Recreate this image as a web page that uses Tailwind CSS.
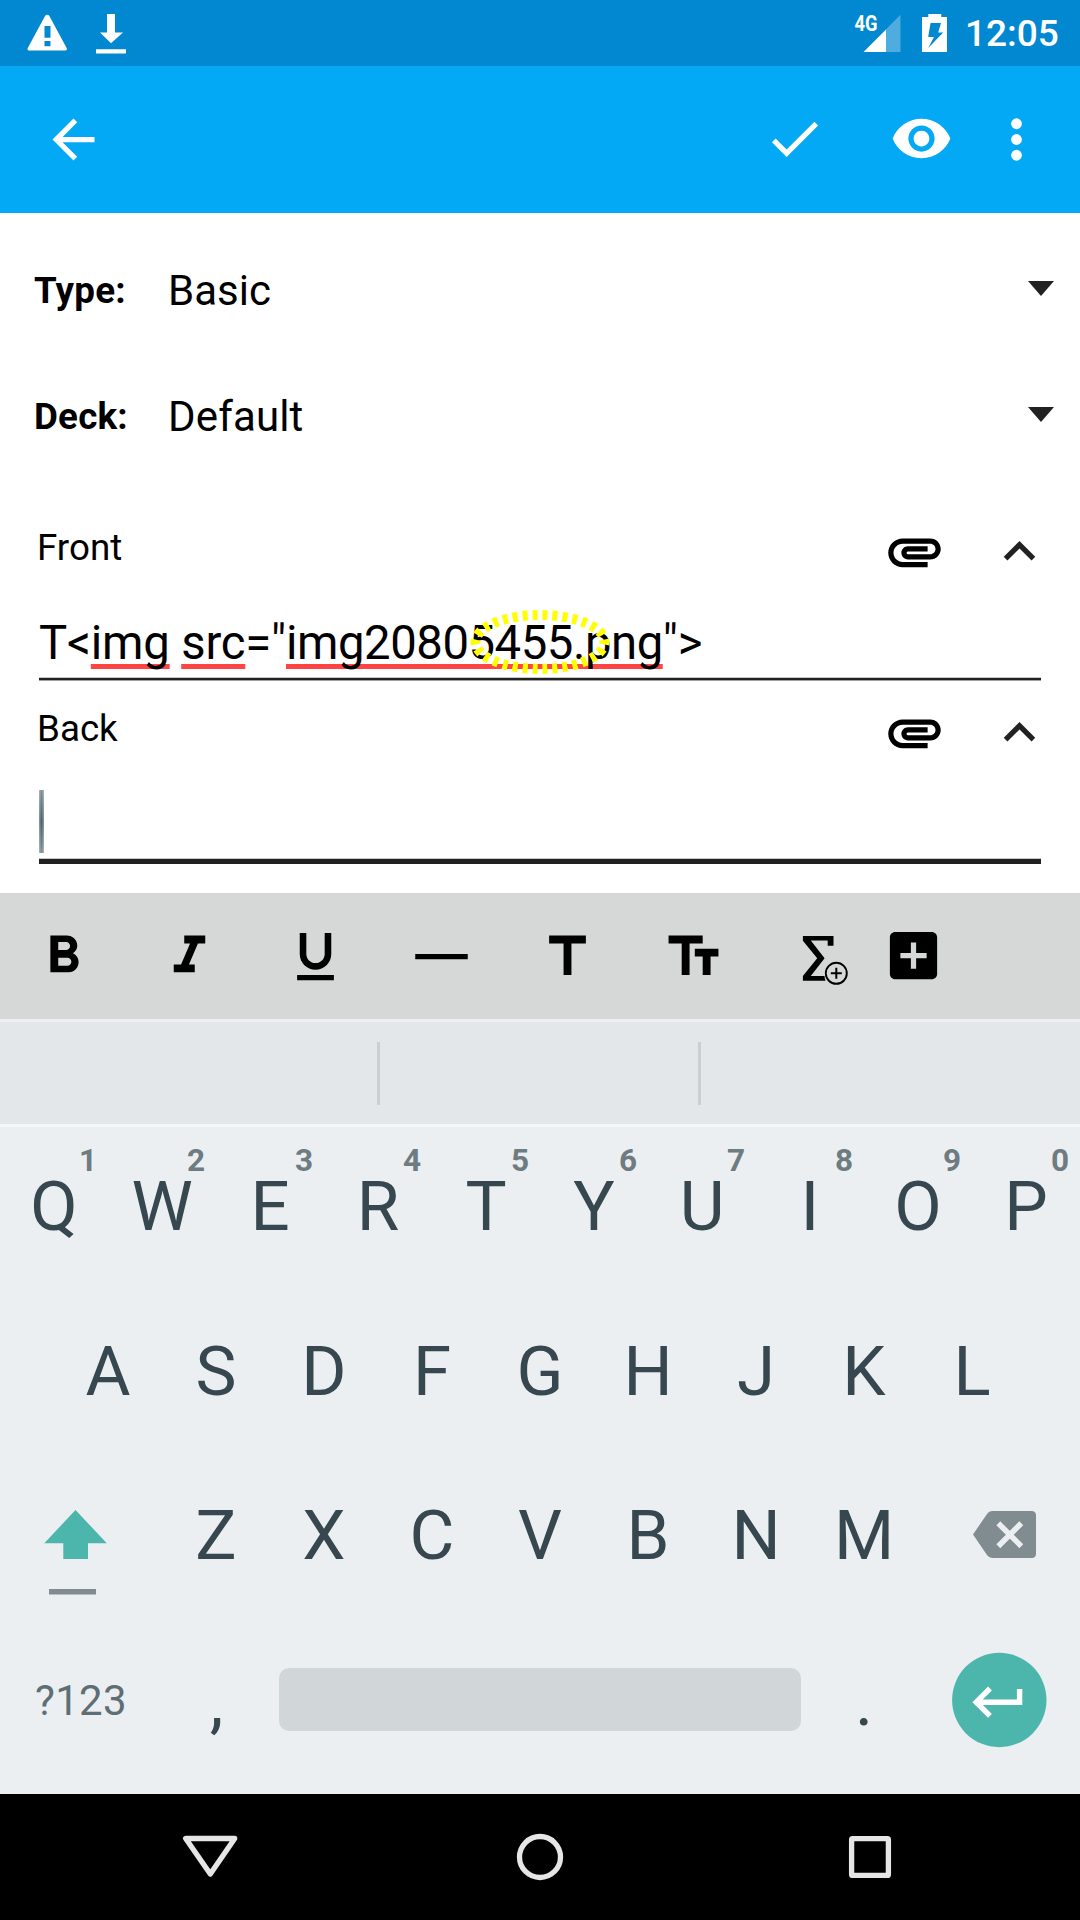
<!DOCTYPE html>
<html lang="en">
<head>
<meta charset="utf-8">
<title>Note editor</title>
<script src="https://cdn.jsdelivr.net/npm/@tailwindcss/browser@4"></script>
</head>
<body class="w-[1080px] h-[1920px] overflow-hidden bg-white text-black font-['Roboto',sans-serif] flex flex-col">

<!-- Status bar -->
<header class="h-[66px] shrink-0 bg-[#0288d1] flex items-center text-white">
  <svg class="ml-[21px] w-[52px] h-[66px]" viewBox="21 0 52 66" fill="currentColor"><path fill-rule="evenodd" d="M45.3 15.4q1.9-1.4 3.800 0L66.900 48.500q.3 1.800-1.200 1.900H28.700q-1.500-.1-1.200-1.900zM44.500 26v11.700h6V26zM44.500 41v5.200h6V41z"/></svg>
  <svg class="ml-[19px] w-[38px] h-[66px]" viewBox="92 0 38 66" fill="currentColor"><path d="M107 14h8v18.500h8L111 43.300 100 32.500h7zM96 49.300h30v4.200H96z"/></svg>
  <svg class="ml-[720px] w-[55px] h-[66px]" viewBox="850 0 55 66" fill="currentColor"><path d="M886 29.300L900.500 14.700V52H886z" fill-opacity=".3"/><path d="M863.500 52L886 29.500V52z"/><text x="854.500" y="31.300" font-size="22.500" font-weight="700" textLength="23" lengthAdjust="spacingAndGlyphs">4G</text></svg>
  <svg class="ml-[11px] w-[36px] h-[66px]" viewBox="916 0 36 66" fill="currentColor"><path fill-rule="evenodd" d="M928.300 14h13v3H947v35h-25V17h6.300zM930.500 23l-2.300 14h5.800l-5.800 11 15-15.600h-5l2.800-9.400z"/></svg>
  <span class="ml-[13px] text-[37px] font-medium leading-[66px] pt-[2px]">12:05</span>
</header>

<!-- App bar -->
<nav class="h-[147px] shrink-0 bg-[#03a9f4] text-white flex items-center">
  <svg class="ml-[42px] w-[63px] h-[63px]" viewBox="0 0 24 24" fill="currentColor"><path d="M20 11H7.830l5.590-5.590L12 4l-8 8 8 8 1.410-1.410L7.830 13H20v-2z"/></svg>
  <svg class="ml-[658px] -mt-[2px] w-[63px] h-[63px]" viewBox="0 0 24 24" fill="currentColor"><path d="M9 16.170L4.830 12l-1.420 1.410L9 19 21 7l-1.410-1.410z"/></svg>
  <svg class="ml-[64px] -mt-[2px] w-[63px] h-[63px]" viewBox="0 0 24 24" fill="currentColor"><path d="M12 4.500C7 4.500 2.730 7.610 1 12c1.730 4.390 6 7.500 11 7.500s9.270-3.110 11-7.500c-1.730-4.390-6-7.500-11-7.500zM12 17c-2.760 0-5-2.240-5-5s2.240-5 5-5 5 2.240 5 5-2.240 5-5 5zm0-8c-1.660 0-3 1.340-3 3s1.340 3 3 3 3-1.340 3-3-1.340-3-3-3z"/></svg>
  <svg class="ml-[32px] w-[63px] h-[63px]" viewBox="0 0 24 24" fill="currentColor"><circle cx="12" cy="6" r="2.050"/><circle cx="12" cy="12" r="2.050"/><circle cx="12" cy="18" r="2.050"/></svg>
</nav>

<!-- Note form -->
<main class="h-[680px] shrink-0 pt-[14px]">
  <div class="h-[126px] flex items-center pl-[34px]">
    <b class="w-[134px] text-[36.750px] tracking-[0.200px] font-bold leading-[126px] pt-[2px]">Type:</b>
    <span class="flex-1 text-[42px] leading-[126px] pt-[2px]">Basic</span>
    <svg class="mr-[26px] -mt-[3px] w-[26px] h-[15px]" viewBox="0 0 26 15"><path d="M0 0h26L13 15z" fill="#212121"/></svg>
  </div>
  <div class="h-[126px] flex items-center pl-[34px]">
    <b class="w-[134px] text-[36.750px] tracking-[0.200px] font-bold leading-[126px] pt-[2px]">Deck:</b>
    <span class="flex-1 text-[42px] tracking-[0.150px] leading-[126px] pt-[2px]">Default</span>
    <svg class="mr-[26px] -mt-[3px] w-[26px] h-[15px]" viewBox="0 0 26 15"><path d="M0 0h26L13 15z" fill="#212121"/></svg>
  </div>

  <section class="mt-[41px] h-[161px]">
    <div class="h-[63px] flex pl-[37px]">
      <span class="flex-1 text-[36.750px] leading-[55px]">Front</span>
      <svg class="w-[63px] h-[63px] mr-[42px]" viewBox="0 0 24 24"><path d="M2 12.500C2 9.460 4.460 7 7.500 7H18c2.210 0 4 1.790 4 4s-1.790 4-4 4H9.500C8.120 15 7 13.880 7 12.500S8.120 10 9.500 10H17v2H9.410c-.55 0-.55 1 0 1H18c1.100 0 2-.9 2-2s-.9-2-2-2H7.500C5.570 9 4 10.570 4 12.500S5.570 16 7.500 16H17v2H7.500C4.460 18 2 15.540 2 12.500z"/></svg>
      <svg class="w-[63px] h-[63px] mr-[29px]" viewBox="0 0 24 24" fill="#212121"><path d="M12 8l-6 6 1.410 1.410L12 10.830l4.590 4.580L18 14z"/></svg>
    </div>
    <div class="relative ml-[39px] w-[1002px] h-[98px] pt-[26px]">
      <div class="text-[47.250px] leading-[68px] whitespace-pre tracking-[-0.200px]">T&lt;<span class="underline decoration-[#ff4444] decoration-[5px] underline-offset-[5px] [text-decoration-skip-ink:none]">img</span> <span class="underline decoration-[#ff4444] decoration-[5px] underline-offset-[5px] [text-decoration-skip-ink:none]">src</span>="<span class="tracking-[-0.450px] underline decoration-[#ff4444] decoration-[5px] underline-offset-[5px] [text-decoration-skip-ink:none]">img20805455.png</span>"&gt;</div>
      <div class="h-[4px] bg-[#212121] border-t border-b border-t-[#c8c8c8] border-b-[#a0a0a0]"></div>
      <!-- dashed highlight over the file name -->
      <svg class="absolute left-[426px] top-[22px] w-[150px] h-[74px]" viewBox="0 0 150 74"><ellipse cx="75" cy="37" rx="64.500" ry="27" fill="none" stroke="#ffff00" stroke-width="10" pathLength="300" stroke-dasharray="5 5" stroke-dashoffset="2.500"/></svg>
    </div>
  </section>

  <section class="mt-[20px] h-[163px]">
    <div class="h-[63px] flex pl-[37px]">
      <span class="flex-1 text-[36.750px] leading-[55px]">Back</span>
      <svg class="w-[63px] h-[63px] mr-[42px]" viewBox="0 0 24 24"><path d="M2 12.500C2 9.460 4.460 7 7.500 7H18c2.210 0 4 1.790 4 4s-1.790 4-4 4H9.500C8.120 15 7 13.880 7 12.500S8.120 10 9.500 10H17v2H9.410c-.55 0-.55 1 0 1H18c1.100 0 2-.9 2-2s-.9-2-2-2H7.500C5.570 9 4 10.570 4 12.500S5.570 16 7.500 16H17v2H7.500C4.460 18 2 15.540 2 12.500z"/></svg>
      <svg class="w-[63px] h-[63px] mr-[29px]" viewBox="0 0 24 24" fill="#212121"><path d="M12 8l-6 6 1.410 1.410L12 10.830l4.590 4.580L18 14z"/></svg>
    </div>
    <div class="ml-[39px] w-[1002px] h-[100px] pt-[26px]">
      <div class="w-[5px] h-[63px] mb-[5px] bg-linear-to-r from-[#8a9aa2] via-[#4a606a] to-[#8a9aa2]"><div class="h-full bg-linear-to-b from-white/30 via-white/0 to-white/30"></div></div>
      <div class="h-[6px] bg-[#212121] border-t border-t-[#c8c8c8]"></div>
    </div>
  </section>
</main>

<!-- Formatting toolbar -->
<div class="h-[126px] shrink-0 bg-[#d6d8d7] flex items-center">
  <div class="w-[126px] flex justify-center"><svg class="w-[63px] h-[63px]" viewBox="0 0 24 24"><path d="M15.600 10.790c.97-.67 1.650-1.770 1.650-2.790 0-2.260-1.750-4-4-4H7v14h7.040c2.090 0 3.710-1.700 3.710-3.790 0-1.520-.86-2.820-2.150-3.420zM10 6.500h3c.83 0 1.500.67 1.500 1.500s-.67 1.500-1.500 1.500h-3v-3zm3.500 9H10v-3h3.500c.83 0 1.500.67 1.500 1.500s-.67 1.500-1.500 1.500z"/></svg></div>
  <div class="w-[126px] flex justify-center"><svg class="w-[63px] h-[63px]" viewBox="0 0 24 24"><path d="M10 4v3h2.210l-3.420 8H6v3h8v-3h-2.210l3.420-8H18V4z"/></svg></div>
  <div class="w-[126px] flex justify-center"><svg class="w-[63px] h-[63px]" viewBox="0 0 24 24"><path d="M12 17c3.310 0 6-2.690 6-6V3h-2.500v8c0 1.930-1.570 3.500-3.500 3.500S8.500 12.930 8.500 11V3H6v8c0 3.310 2.690 6 6 6zm-7 2v2h14v-2H5z"/></svg></div>
  <div class="w-[126px] flex justify-center"><svg class="w-[63px] h-[63px]" viewBox="0 0 24 24"><path d="M2 11h20v2H2z"/></svg></div>
  <div class="w-[126px] flex justify-center"><svg class="w-[63px] h-[63px]" viewBox="0 0 24 24"><path d="M5 4v3h5.500v12h3V7H19V4z"/></svg></div>
  <div class="w-[126px] flex justify-center"><svg class="w-[63px] h-[63px]" viewBox="0 0 24 24"><path d="M2.500 4v3h5v12h3V7h5V4h-13zm19 5h-9v3h3v7h3v-7h3V9z"/></svg></div>
  <div class="w-[126px] flex justify-center"><svg class="w-[63px] h-[63px]" viewBox="0.700 0.500 63 63"><path d="M15.600 11.500h30.600v9.700h-5.800v-5.200H23.500L37.300 33.800 23.500 51.500h13.700q.1 2.500 1 4.700H15.600v-4.700L29.900 33.800 15.600 16.300z"/><circle cx="49" cy="48.800" r="10.500" fill="none" stroke="#000" stroke-width="1.900"/><path d="M49 43.300v11M43.500 48.800h11" stroke="#000" stroke-width="2"/></svg></div>
  <svg class="w-[63px] h-[63px] mb-[2px]" viewBox="0 0 24 24"><path d="M19 3H5c-1.110 0-2 .9-2 2v14c0 1.100.89 2 2 2h14c1.100 0 2-.9 2-2V5c0-1.100-.9-2-2-2zm-2 10h-4v4h-2v-4H7v-2h4V7h2v4h4v2z"/></svg>
</div>

<!-- Suggestion strip -->
<div class="h-[108px] shrink-0 bg-[#e3e7e9] border-t-[3px] border-b-[3px] border-t-[#eceeef] border-b-[#f5f8fa] flex items-center">
  <i class="ml-[377px] w-[3px] h-[63px] bg-[#cacfd1]"></i>
  <i class="ml-[318px] w-[3px] h-[63px] bg-[#cacfd1]"></i>
</div>

<!-- Keyboard -->
<div class="h-[667px] shrink-0 bg-[#eceff1] text-[#37474f] text-[69px] text-center">
  <div class="flex h-[156px] mb-[5px] leading-[159px]">
    <div class="relative w-[108px]">Q<sup class="absolute right-0 top-[14px] w-[40px] text-[31.500px] leading-[40px] font-bold text-[#6e7b80]">1</sup></div>
    <div class="relative w-[108px]">W<sup class="absolute right-0 top-[14px] w-[40px] text-[31.500px] leading-[40px] font-bold text-[#6e7b80]">2</sup></div>
    <div class="relative w-[108px]">E<sup class="absolute right-0 top-[14px] w-[40px] text-[31.500px] leading-[40px] font-bold text-[#6e7b80]">3</sup></div>
    <div class="relative w-[108px]">R<sup class="absolute right-0 top-[14px] w-[40px] text-[31.500px] leading-[40px] font-bold text-[#6e7b80]">4</sup></div>
    <div class="relative w-[108px]">T<sup class="absolute right-0 top-[14px] w-[40px] text-[31.500px] leading-[40px] font-bold text-[#6e7b80]">5</sup></div>
    <div class="relative w-[108px]">Y<sup class="absolute right-0 top-[14px] w-[40px] text-[31.500px] leading-[40px] font-bold text-[#6e7b80]">6</sup></div>
    <div class="relative w-[108px]">U<sup class="absolute right-0 top-[14px] w-[40px] text-[31.500px] leading-[40px] font-bold text-[#6e7b80]">7</sup></div>
    <div class="relative w-[108px]">I<sup class="absolute right-0 top-[14px] w-[40px] text-[31.500px] leading-[40px] font-bold text-[#6e7b80]">8</sup></div>
    <div class="relative w-[108px]">O<sup class="absolute right-0 top-[14px] w-[40px] text-[31.500px] leading-[40px] font-bold text-[#6e7b80]">9</sup></div>
    <div class="relative w-[108px]">P<sup class="absolute right-0 top-[14px] w-[40px] text-[31.500px] leading-[40px] font-bold text-[#6e7b80]">0</sup></div>
  </div>
  <div class="flex h-[165px] leading-[167px] px-[54px]">
    <div class="w-[108px]">A</div><div class="w-[108px]">S</div><div class="w-[108px]">D</div><div class="w-[108px]">F</div><div class="w-[108px]">G</div><div class="w-[108px]">H</div><div class="w-[108px]">J</div><div class="w-[108px]">K</div><div class="w-[108px]">L</div>
  </div>
  <div class="flex h-[165px] leading-[166px]">
    <svg class="w-[162px] h-[165px]" viewBox="0 1453 162 165"><path d="M75.500 1510l31.300 33.200H88V1559H63.300v-15.800H44.300z" fill="#4db6ac"/><path d="M49 1589h47v5.500H49z" fill="#808c90"/></svg>
    <div class="w-[108px]">Z</div><div class="w-[108px]">X</div><div class="w-[108px]">C</div><div class="w-[108px]">V</div><div class="w-[108px]">B</div><div class="w-[108px]">N</div><div class="w-[108px]">M</div>
    <svg class="w-[162px] h-[165px]" viewBox="918 1453 162 165"><path d="M993 1511h38.500q4.500 0 4.500 4.500v38q0 4.500-4.500 4.500H992q-3 0-5-3L973 1534.500 987 1514q2-3 5-3z" fill="#808c90"/><path d="M998.300 1523.200l23 23M1021.300 1523.200l-23 23" stroke="#eceff1" stroke-width="5.500"/></svg>
  </div>
  <div class="flex h-[165px] leading-[165px] items-center">
    <div class="w-[162px] text-left pl-[35px] text-[42px] tracking-[0.300px] text-[#5f6e74]">?123</div>
    <div class="w-[108px] pt-[1px] pl-[1px]">,</div>
    <div class="ml-[9px] mb-[2px] w-[522px] h-[63px] rounded-[10px] bg-[#d1d6d9]"></div>
    <div class="ml-[9px] w-[108px] pt-[1px]">.</div>
    <svg class="w-[162px] h-[165px]" viewBox="918 1618 162 165"><circle cx="999.300" cy="1700" r="47.200" fill="#4db6ac"/><path d="M1019.600 1689v13.200H977M990 1688.500l-13.800 13.700 13.800 13.700" fill="none" stroke="#fff" stroke-width="5.400"/></svg>
  </div>
</div>

<!-- Navigation bar -->
<footer class="h-[126px] shrink-0 bg-black">
  <svg class="w-[1080px] h-[126px]" viewBox="0 1794 1080 126" fill="none" stroke="#e6e6e6" stroke-width="5.300" stroke-linejoin="round"><path d="M185.700 1838.500h49L210.300 1874z"/><circle cx="540" cy="1857" r="20.500"/><rect x="851.600" y="1838.600" width="36.800" height="36.800" rx="1"/></svg>
</footer>
</body>
</html>
